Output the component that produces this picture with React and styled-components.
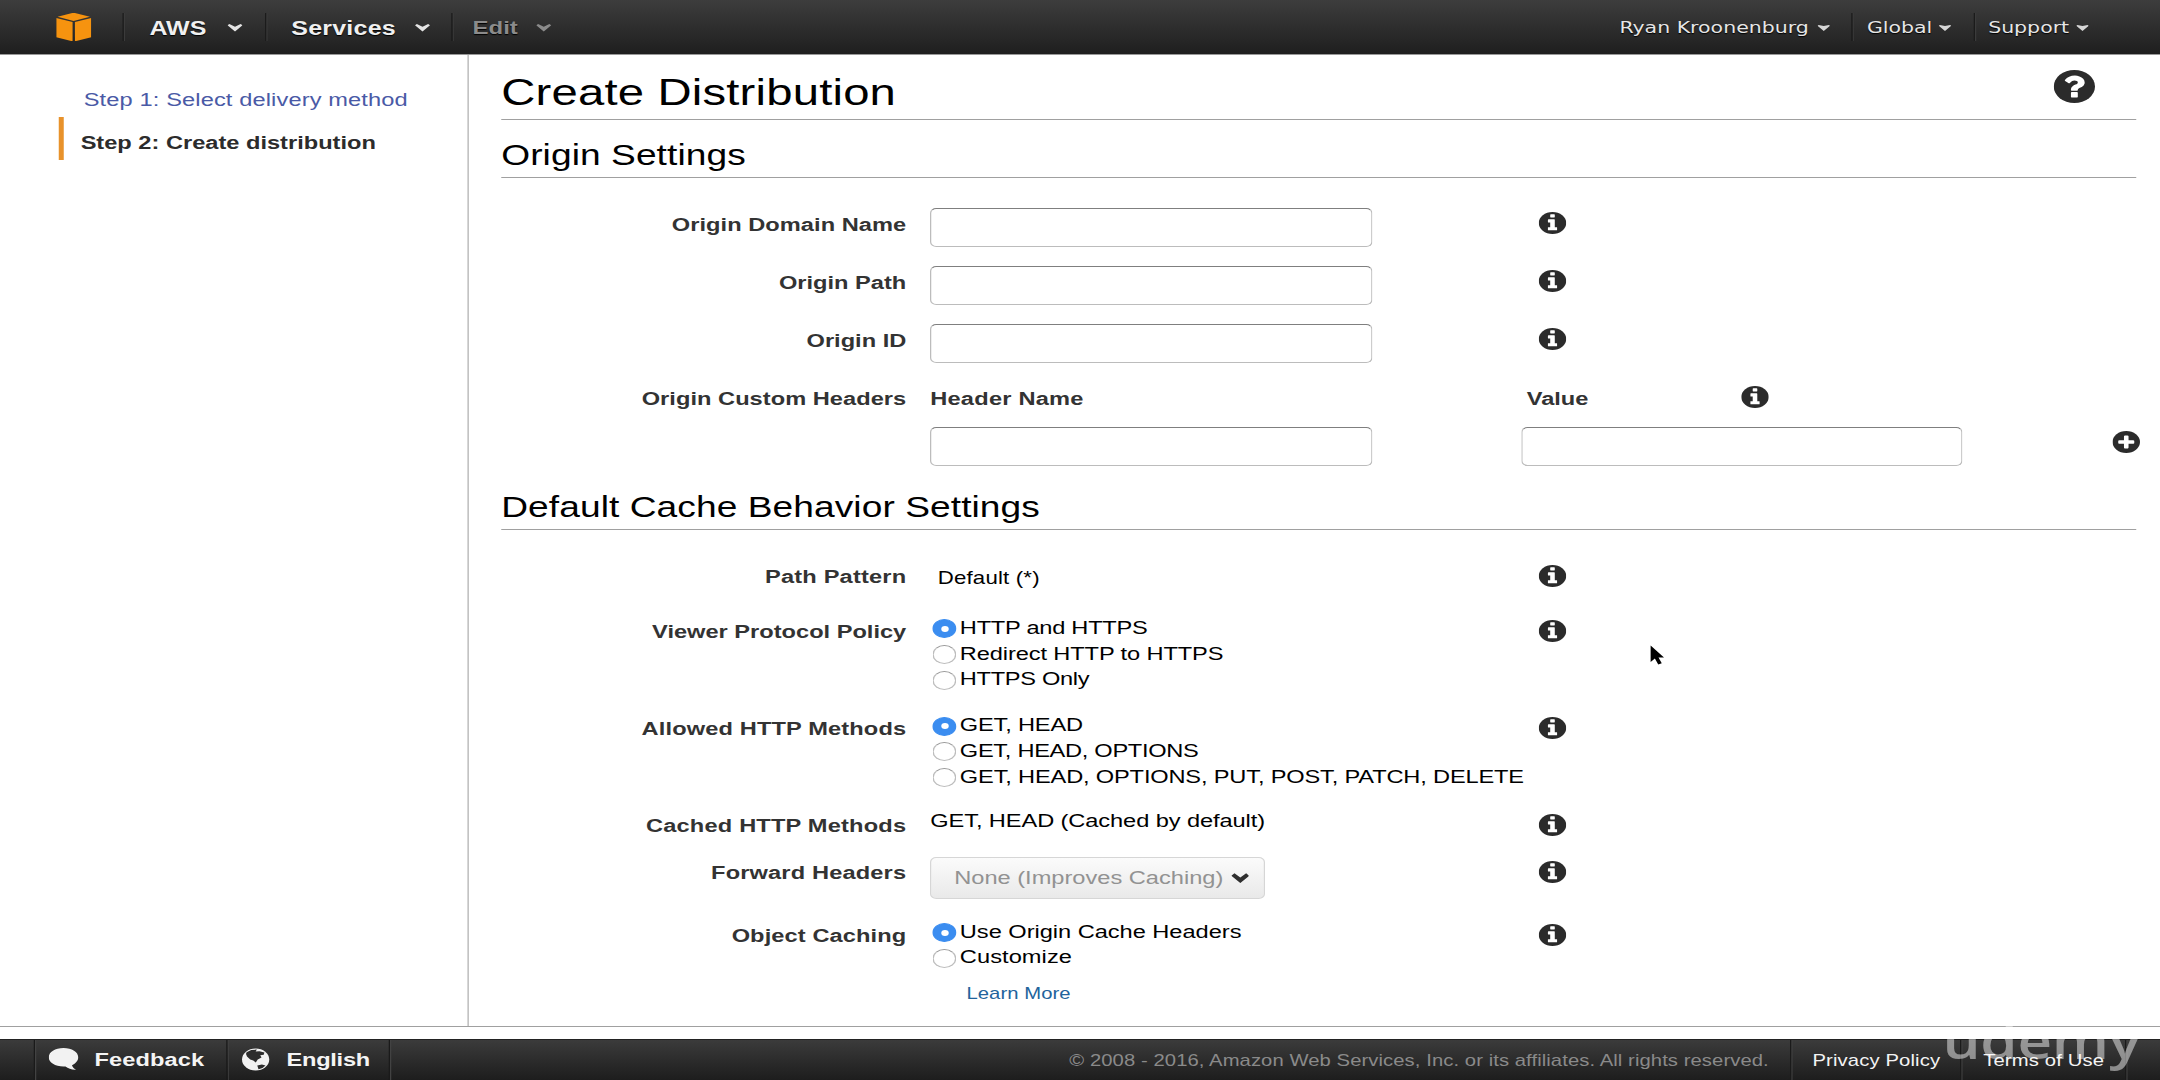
import React from "react";
import styled, { createGlobalStyle } from "styled-components";

const sans = '"Liberation Sans", Arial, Helvetica, sans-serif';

const GlobalStyle = createGlobalStyle`
  * { box-sizing: border-box; }
  html, body { margin: 0; padding: 0; background: #fff; overflow: hidden; }
`;

/* The console is laid out at 16:10 and widened to a 2:1 display. */
const Screen = styled.div`
  position: relative;
  display: flex;
  flex-direction: column;
  width: 1728px;
  height: 1080px;
  overflow: hidden;
  transform: scaleX(1.25);
  transform-origin: 0 0;
  font-family: ${sans};
  font-size: 18.9px;
  line-height: 26px;
  color: #000;
  background: #fff;
  white-space: nowrap;
`;

/* ---------- header ---------- */

const Header = styled.header`
  display: flex;
  align-items: center;
  flex: none;
  height: 55px;
  background: linear-gradient(#3d3d3d, #1f1f1f 53px);
  border-bottom: 1px solid #999;
`;

const LogoCell = styled.div`
  display: flex;
  width: 98px;
  padding-left: 45.2px;
`;

const NavItem = styled.div`
  display: flex;
  align-items: center;
  justify-content: space-between;
  height: 28px;
  width: ${(p) => p.$width}px;
  padding: 2px 17.5px 0 ${(p) => p.$left}px;
  border-left: 1px solid #1b1b1b;
  box-shadow: inset 1px 0 #3b3b3b;
  font-size: ${(p) => (p.$dim ? 19.2 : 20)}px;
  font-weight: bold;
  letter-spacing: ${(p) => p.$spacing || 0}px;
  color: ${(p) => (p.$dim ? "#8b8b8b" : "#f0f0f0")};
  text-shadow: 0 1px 1px #000;
`;

const AccountNav = styled.nav`
  display: flex;
  margin-left: auto;
`;

const AccountItem = styled.div`
  display: flex;
  align-items: center;
  justify-content: space-between;
  height: 28px;
  width: ${(p) => p.$width}px;
  padding: 1px ${(p) => p.$right}px 0 ${(p) => p.$left}px;
  border-left: 1px solid ${(p) => (p.$first ? "transparent" : "#1b1b1b")};
  box-shadow: ${(p) => (p.$first ? "none" : "inset 1px 0 #3b3b3b")};
  font-family: "DejaVu Sans", Verdana, sans-serif;
  font-size: 16.4px;
  color: #e6e6e6;
  text-shadow: 0 1px 1px #000;
`;

/* ---------- body ---------- */

const Body = styled.div`
  display: flex;
  flex: none;
  height: 972px;
  border-bottom: 1px solid #a0a0a0;
`;

const Sidebar = styled.aside`
  flex: none;
  width: 375px;
  padding: 19.3px 0 0 47px;
  border-right: 1px solid #b0b0b0;
`;

const Step = styled.div`
  display: flex;
  align-items: center;
  height: 43px;
  padding: 9px 0 0 ${(p) => (p.$current ? 13.5 : 16)}px;
  border-left: 4px solid ${(p) => (p.$current ? "#e8922b" : "transparent")};
  font-weight: ${(p) => (p.$current ? "bold" : "normal")};
  letter-spacing: ${(p) => (p.$current ? 0 : 0.1)}px;
  color: ${(p) => (p.$current ? "#2c2c2c" : "#4a5aa6")};
`;

const Content = styled.main`
  flex: 1;
  padding: 14.6px 19.2px 0 26px;
`;

const TitleBar = styled.div`
  display: flex;
  justify-content: space-between;
  align-items: flex-start;
  height: 50px;
  padding-right: 33px;
  border-bottom: 1px solid #a0a0a0;
`;

const Title = styled.h1`
  margin: 0;
  font-size: 37.8px;
  line-height: 44px;
  font-weight: normal;
  letter-spacing: 0.15px;
`;

const SectionTitle = styled.h2`
  height: 42px;
  margin: ${(p) => p.$top}px 0 ${(p) => p.$bottom}px;
  border-bottom: 1px solid #a0a0a0;
  font-size: 29.7px;
  line-height: 37px;
  font-weight: normal;
  letter-spacing: 0.06px;
`;

const Row = styled.div`
  display: grid;
  grid-template-columns: 343.2px ${(p) => p.$split || 486.9}px 176.8px 1fr auto;
  align-items: start;
  height: ${(p) => p.$height}px;
`;

const Label = styled.div`
  padding: 4px 19.2px 0 0;
  text-align: right;
  font-weight: bold;
  letter-spacing: ${(p) => p.$spacing || 0}px;
  color: #333;
`;

const ColumnHead = styled.div`
  padding: 4px 0 0 ${(p) => p.$left || 0}px;
  font-weight: bold;
  letter-spacing: ${(p) => p.$spacing || 0}px;
  color: #333;
`;

const InfoCell = styled.div`
  display: flex;
  padding-top: ${(p) => p.$top}px;
  margin-right: ${(p) => p.$outset || 0}px;
`;

const Field = styled.input`
  display: block;
  width: 353.4px;
  height: 39px;
  padding: 0 8px;
  border: 1px solid #bcbcbc;
  border-top-color: #7f7f7f;
  border-radius: 5px;
  background: #fff;
  outline: none;
`;

const Value = styled.div`
  padding: ${(p) => p.$top || 0}px 0 0 ${(p) => p.$left || 0}px;
  margin-top: ${(p) => p.$shift || 0}px;
  font-size: ${(p) => p.$size || 18.9}px;
  letter-spacing: ${(p) => p.$spacing || 0}px;
`;

const Options = styled.div`
  display: flex;
  flex-direction: column;
`;

const Option = styled.label`
  display: flex;
  align-items: flex-start;
  gap: 2.6px;
  height: 25.7px;
  padding-left: 2.1px;
  line-height: 26.2px;
  letter-spacing: ${(p) => p.$spacing || 0}px;
`;

const Radio = styled.span`
  display: flex;
  align-items: center;
  justify-content: center;
  flex: none;
  width: 19px;
  height: 19px;
  margin-top: 4.5px;
  border-radius: 50%;
  border: 1px solid ${(p) => (p.$on ? "#3b8df0" : "#bdbdbd")};
  border-top-color: ${(p) => (p.$on ? "#3b8df0" : "#999")};
  background: ${(p) => (p.$on ? "#3b8df0" : "#fff")};

  &::after {
    content: "";
    width: 6.4px;
    height: 6.4px;
    border-radius: 50%;
    background: #fff;
  }
`;

const SelectBox = styled.div`
  display: flex;
  align-items: center;
  justify-content: space-between;
  width: 268px;
  height: 42px;
  margin-top: 0.5px;
  padding: 0 12px 0 18.2px;
  border: 1px solid #d6d6d6;
  border-radius: 5px;
  background: linear-gradient(#fbfbfb, #e9e9e9);
  color: #929292;
`;

const LearnMore = styled.a`
  margin: 12px 0 0 29px;
  font-size: 16.2px;
  line-height: 22px;
  letter-spacing: 0.05px;
  color: #22639c;
`;

/* ---------- footer ---------- */

const Footer = styled.footer`
  display: flex;
  align-items: center;
  flex: none;
  height: 41px;
  margin-top: 12px;
  background: linear-gradient(#3b3b3b, #1d1d1d);
  border-top: 1px solid #222;
`;

const FooterItem = styled.div`
  display: flex;
  align-items: center;
  height: 40px;
  width: ${(p) => p.$width}px;
  padding: 0 0 1px ${(p) => p.$left}px;
  gap: ${(p) => p.$gap || 0}px;
  border-left: 1px solid #1a1a1a;
  box-shadow: inset 1px 0 #424242;
  font-weight: ${(p) => (p.$bold ? "bold" : "normal")};
  font-size: ${(p) => (p.$bold ? 18.9 : 16.2)}px;
  letter-spacing: ${(p) => p.$spacing || 0}px;
  color: #f4f4f4;
`;

const FooterStart = styled.div`
  width: 27px;
`;

const Copyright = styled.div`
  margin-left: auto;
  padding: 0 17px 1px 0;
  font-size: 16.2px;
  letter-spacing: 0.06px;
  color: #8a8a8a;
`;

/* ---------- overlays ---------- */

const Watermark = styled.div`
  position: absolute;
  right: 15.5px;
  bottom: 6px;
  font-family: "Open Sans", sans-serif;
  font-size: 48px;
  font-weight: 600;
  line-height: 66px;
  letter-spacing: -0.2px;
  color: rgba(255, 255, 255, 0.47);
`;

const Pointer = styled.svg`
  position: absolute;
  left: 1318.5px;
  top: 643px;
  width: 16px;
  height: 26px;
`;

/* ---------- icons ---------- */

const GLYPHS = {
  info: "M1152 1376v-160q0-14-9-23t-23-9h-96v-512q0-14-9-23t-23-9h-320q-14 0-23 9t-9 23v160q0 14 9 23t23 9h96v320h-96q-14 0-23 9t-9 23v160q0 14 9 23t23 9h448q14 0 23-9t9-23zM1024 480v-160q0-14-9-23t-23-9h-192q-14 0-23 9t-9 23v160q0 14 9 23t23 9h192q14 0 23-9t9-23z",
  help: "M1024 1376v-192q0-14-9-23t-23-9h-192q-14 0-23 9t-9 23v192q0 14 9 23t23 9h192q14 0 23-9t9-23zM1280 704q0-88-55.500-163t-138.500-116-170-41q-243 0-371 213-15 24 8 42l132 100q7 6 19 6 16 0 25-12 53-68 86-92 34-24 86-24 48 0 85.500 26t37.500 59q0 38-20 61t-68 45q-63 28-115.500 86.500t-52.500 125.500v36q0 14 9 23t23 9h192q14 0 23-9t9-23q0-19 21.500-49.500t54.500-49.500q32-18 49-28.500t46-35 44.500-48 28-60.500 12.500-81z",
  plus: "M1344 960v-128q0-26-19-45t-45-19h-256v-256q0-26-19-45t-45-19h-128q-26 0-45 19t-19 45v256h-256q-26 0-45 19t-19 45v128q0 26 19 45t45 19h256v256q0 26 19 45t45 19h128q26 0 45-19t19-45v-256h256q26 0 45-19t19-45z",
};

function Badge({ kind, size = 22 }) {
  return (
    <svg width={size} height={size} viewBox="128 128 1536 1536">
      <circle cx="896" cy="896" r="768" fill="#2b2b2b" />
      <path d={GLYPHS[kind]} fill="#fff" />
    </svg>
  );
}

function Info({ top }) {
  return (
    <InfoCell $top={top}>
      <Badge kind="info" />
    </InfoCell>
  );
}

function Cube() {
  return (
    <svg width="28" height="28" viewBox="81 39 105 84" preserveAspectRatio="none" fill="#f6930f">
      <path d="M85 50L133 38L182 50L133 63Z" />
      <path d="M81 54L130 66V124L81 112Z" />
      <path d="M186 54L137 66V124L186 112Z" />
    </svg>
  );
}

function Chevron({ dim }) {
  return (
    <svg width="12" height="7.5" viewBox="0 0 12 8" preserveAspectRatio="none">
      <path d="M0 1.3L1.500 0L6 3L10.500 0L12 1.300L6 8Z" fill={dim ? "#8b8b8b" : "#e4e4e4"} />
    </svg>
  );
}

function SmallCaret() {
  return (
    <svg width="10" height="6" viewBox="0 0 10 6">
      <path d="M0 0.800L0.900 0L5 1L9.100 0L10 0.800L5 6Z" fill="#d6d6d6" />
    </svg>
  );
}

function SelectArrow() {
  return (
    <svg width="14.500" height="10.500" viewBox="0 0 15 11">
      <path d="M0 3L2.600 0.300L7.500 4.800L12.400 0.300L15 3L7.500 10.500Z" fill="#2f2f2f" />
    </svg>
  );
}

function Bubble() {
  return (
    <svg width="24" height="23" viewBox="0 0 24 23">
      <path
        d="M11.800 0C18.500 0 23.600 4 23.600 9.300C23.600 12.700 21.600 15.500 18.600 17.200C19 19 20 20.500 21.800 21.700C18.500 21.900 15.500 20.700 13.400 18.500C12.900 18.600 12.300 18.600 11.800 18.600C5.100 18.600 0 14.500 0 9.300C0 4 5.100 0 11.800 0Z"
        fill="#f2f2f2"
      />
    </svg>
  );
}

function Globe() {
  return (
    <svg width="23" height="23" viewBox="0 0 23 23">
      <circle cx="11.500" cy="11.500" r="10.900" fill="#f2f2f2" />
      <path
        d="M4.300 4.200L8 2L12.500 1.600L11.500 3.400L14.600 3.200L18.500 4.400L18 6.800L15.200 7.200L16.200 9.600L13.200 11.600L11.600 14.600L9.600 12.600L7.200 11.400L4.600 8.600L3.800 6Z"
        fill="#2c2c2c"
      />
      <path d="M12.800 17.400L16.500 16.600L19.400 17.400L17 20L13.800 21.300Z" fill="#2c2c2c" />
    </svg>
  );
}

function Cursor() {
  return (
    <Pointer viewBox="0 0 16 26">
      <path
        d="M1.500 2.500V19L4.900 15.400L7.600 21.600L10.400 20.200L7.800 14.400H12.200Z"
        fill="#000"
        stroke="#fff"
        strokeWidth="2"
        paintOrder="stroke"
      />
    </Pointer>
  );
}

/* ---------- parts ---------- */

function TextRow({ label, spacing }) {
  return (
    <Row $height={58}>
      <Label $spacing={spacing}>{label}</Label>
      <Field />
      <Info top={4} />
    </Row>
  );
}

function RadioGroup({ options, children }) {
  return (
    <Options>
      {options.map(([text, spacing], i) => (
        <Option key={text} $spacing={spacing}>
          <Radio $on={i === 0} />
          {text}
        </Option>
      ))}
      {children}
    </Options>
  );
}

const VIEWER_POLICIES = [
  ["HTTP and HTTPS", -0.2],
  ["Redirect HTTP to HTTPS", -0.09],
  ["HTTPS Only", -0.25],
];

const ALLOWED_METHODS = [
  ["GET, HEAD", -0.15],
  ["GET, HEAD, OPTIONS", -0.24],
  ["GET, HEAD, OPTIONS, PUT, POST, PATCH, DELETE", -0.13],
];

const CACHING_MODES = [
  ["Use Origin Cache Headers", -0.02],
  ["Customize", 0.05],
];

export default function App() {
  return (
    <>
      <GlobalStyle />
      <Screen>
        <Header>
          <LogoCell>
            <Cube />
          </LogoCell>
          <NavItem $width={113.5} $left={20.5}>
            AWS
            <Chevron />
          </NavItem>
          <NavItem $width={149.5} $left={20.5} $spacing={0.18}>
            Services
            <Chevron />
          </NavItem>
          <NavItem $width={97.5} $left={16} $dim>
            Edit
            <Chevron dim />
          </NavItem>
          <AccountNav>
            <AccountItem $width={186.5} $left={0} $right={17.5} $first>
              Ryan Kroonenburg
              <SmallCaret />
            </AccountItem>
            <AccountItem $width={97.5} $left={11.5} $right={18}>
              Global
              <SmallCaret />
            </AccountItem>
            <AccountItem $width={149.5} $left={11} $right={56.7}>
              Support
              <SmallCaret />
            </AccountItem>
          </AccountNav>
        </Header>

        <Body>
          <Sidebar>
            <Step>Step 1: Select delivery method</Step>
            <Step $current>Step 2: Create distribution</Step>
          </Sidebar>

          <Content>
            <TitleBar>
              <Title>Create Distribution</Title>
              <Badge kind="help" size={33} />
            </TitleBar>

            <SectionTitle $top={16.4} $bottom={30}>
              Origin Settings
            </SectionTitle>
            <TextRow label="Origin Domain Name" spacing={0.04} />
            <TextRow label="Origin Path" />
            <TextRow label="Origin ID" />
            <Row $height={44.7} $split={472.4}>
              <Label $spacing={0.03}>Origin Custom Headers</Label>
              <ColumnHead $spacing={0.18}>Header Name</ColumnHead>
              <ColumnHead $left={4.8}>Value</ColumnHead>
              <Info top={4} />
            </Row>
            <Row $height={61.7} $split={472.4}>
              <span />
              <Field />
              <Field />
              <span />
              <InfoCell $top={4.5} $outset={-3}>
                <Badge kind="plus" />
              </InfoCell>
            </Row>

            <SectionTitle $top={0} $bottom={29.6}>
              Default Cache Behavior Settings
            </SectionTitle>
            <Row $height={55}>
              <Label $spacing={0.14}>Path Pattern</Label>
              <Value $top={5} $left={6} $size={17.8} $spacing={0.14}>
                Default (*)
              </Value>
              <Info top={4.6} />
            </Row>
            <Row $height={97.2}>
              <Label>Viewer Protocol Policy</Label>
              <RadioGroup options={VIEWER_POLICIES} />
              <Info top={5} />
            </Row>
            <Row $height={97.3}>
              <Label $spacing={0.11}>Allowed HTTP Methods</Label>
              <RadioGroup options={ALLOWED_METHODS} />
              <Info top={5} />
            </Row>
            <Row $height={47}>
              <Label $spacing={0.15}>Cached HTTP Methods</Label>
              <Value $shift={-1} $spacing={-0.07}>
                GET, HEAD (Cached by default)
              </Value>
              <Info top={4.5} />
            </Row>
            <Row $height={62.3}>
              <Label $spacing={0.12}>Forward Headers</Label>
              <SelectBox>
                None (Improves Caching)
                <SelectArrow />
              </SelectBox>
              <Info top={5} />
            </Row>
            <Row $height={100}>
              <Label $spacing={0.08}>Object Caching</Label>
              <RadioGroup options={CACHING_MODES}>
                <LearnMore>Learn More</LearnMore>
              </RadioGroup>
              <Info top={5} />
            </Row>
          </Content>
        </Body>

        <Footer>
          <FooterStart />
          <FooterItem $bold $width={153.7} $left={10.5} $gap={13} $spacing={0.1}>
            <Bubble />
            Feedback
          </FooterItem>
          <FooterItem $bold $width={130} $left={11.8} $gap={12.7} $spacing={-0.2}>
            <Globe />
            English
          </FooterItem>
          <FooterItem $width={20} $left={0} />
          <Copyright>
            © 2008 - 2016, Amazon Web Services, Inc. or its affiliates. All rights reserved.
          </Copyright>
          <FooterItem $width={136} $left={17} $spacing={0.1}>
            Privacy Policy
          </FooterItem>
          <FooterItem $width={132} $left={17.5} $spacing={0.12}>
            Terms of Use
          </FooterItem>
          <FooterItem $width={28} $left={0} />
        </Footer>

        <Watermark>udemy</Watermark>
        <Cursor />
      </Screen>
    </>
  );
}
